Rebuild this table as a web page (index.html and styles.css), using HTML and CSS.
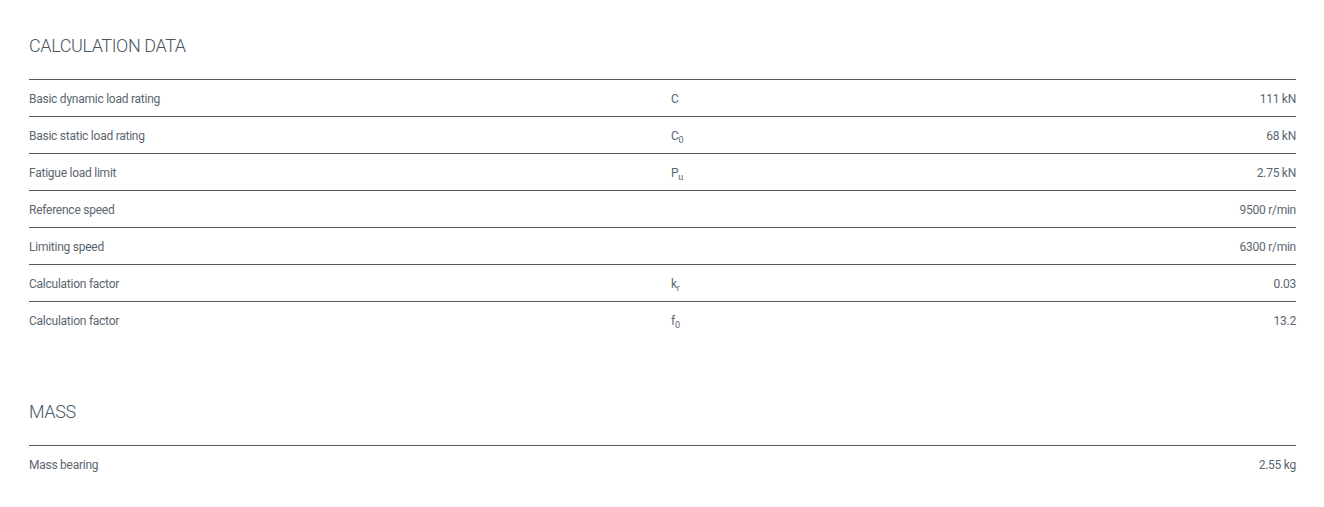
FILE: index.html
```html
<!DOCTYPE html>
<html>
<head>
<meta charset="utf-8">
<link rel="stylesheet" href="styles.css">
</head>
<body>
<div class="page">
  <section class="section">
    <h2 class="title">CALCULATION DATA</h2>
    <div class="table">
      <div class="row"><span class="name">Basic dynamic load rating</span><span class="sym">C</span><span class="val">111 kN</span></div>
      <div class="row"><span class="name">Basic static load rating</span><span class="sym">C<sub>0</sub></span><span class="val">68 kN</span></div>
      <div class="row"><span class="name">Fatigue load limit</span><span class="sym">P<sub>u</sub></span><span class="val">2.75 kN</span></div>
      <div class="row"><span class="name">Reference speed</span><span class="sym"></span><span class="val">9500 r/min</span></div>
      <div class="row"><span class="name">Limiting speed</span><span class="sym"></span><span class="val">6300 r/min</span></div>
      <div class="row"><span class="name">Calculation factor</span><span class="sym">k<sub>r</sub></span><span class="val">0.03</span></div>
      <div class="row"><span class="name">Calculation factor</span><span class="sym">f<sub>0</sub></span><span class="val">13.2</span></div>
    </div>
  </section>
  <section class="section section-mass">
    <h2 class="title">MASS</h2>
    <div class="table">
      <div class="row"><span class="name">Mass bearing</span><span class="sym"></span><span class="val">2.55 kg</span></div>
    </div>
  </section>
</div>
</body>
</html>
```
FILE: styles.css
```css
html, body {
  margin: 0;
  padding: 0;
  background: #ffffff;
}
.page {
  padding: 33px 28px 0 29px;
  font-family: "Roboto", "Liberation Sans", sans-serif;
  color: #5b6670;
}
.section-mass {
  margin-top: 61px;
}
.title {
  margin: 0 0 22px 0;
  padding-top: 1px;
  height: 23px;
  font-size: 18px;
  line-height: 24px;
  font-weight: 300;
  color: #485662;
  letter-spacing: -0.4px;
}
.row {
  display: grid;
  grid-template-columns: 642px 1fr auto;
  align-items: center;
  box-sizing: border-box;
  height: 37px;
  padding-top: 2px;
  border-top: 1px solid #4f5c66;
  font-size: 12px;
  letter-spacing: -0.25px;
}
.sym sub {
  font-size: 9px;
  vertical-align: -3px;
  line-height: 0;
}
.val {
  text-align: right;
}
```
